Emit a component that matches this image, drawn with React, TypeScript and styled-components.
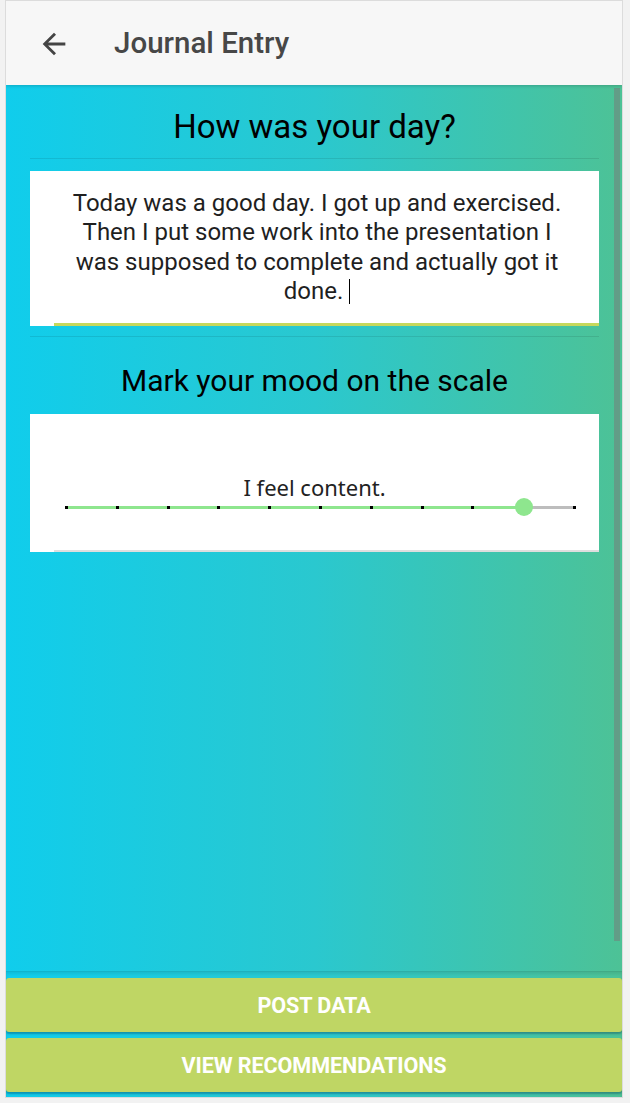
import React from "react";
import styled, { createGlobalStyle } from "styled-components";

const GlobalStyle = createGlobalStyle`
  html, body {
    margin: 0;
    padding: 0;
    background: #f2f2f2;
  }
  body {
    font-family: Roboto, "Liberation Sans", sans-serif;
  }
  * { box-sizing: border-box; }
`;

const Frame = styled.div`
  width: 618px;
  height: 1098px;
  margin-left: 5px;
  border: 1px solid #dcdcdc;
  display: flex;
  flex-direction: column;
  overflow: hidden;
  background: linear-gradient(to right, #10cdec 0%, #2ac8cf 50%, #4dc296 100%);
`;

const Toolbar = styled.header`
  height: 84px;
  flex: 0 0 84px;
  background: #f7f7f7;
  display: flex;
  align-items: center;
  padding-left: 30px;
  position: relative;
  z-index: 2;
  box-shadow: 0 1px 3px rgba(0, 0, 0, 0.18);
`;

const BackButton = styled.button`
  width: 36px;
  height: 36px;
  padding: 0;
  border: none;
  background: transparent;
  display: flex;
  align-items: center;
  justify-content: center;
  margin-right: 42px;
  margin-top: 2px;
  color: #444;
`;

const Title = styled.h1`
  margin: 0;
  font-family: Roboto, "Liberation Sans", sans-serif;
  font-size: 29.5px;
  font-weight: 500;
  color: #474747;
`;

const Body = styled.div`
  flex: 1;
  position: relative;
  display: flex;
  flex-direction: column;
  min-height: 0;
`;

const Main = styled.main`
  flex: 1;
  padding: 0 23px 0 24px;
  display: flex;
  flex-direction: column;
`;

const Scrollbar = styled.div`
  position: absolute;
  right: 2px;
  top: 3px;
  width: 6px;
  height: 853px;
  background: rgba(119, 119, 119, 0.5);
`;

const SectionTitle = styled.h2<{ $top: number; $bottom: number; $size: number }>`
  margin: ${(p) => p.$top}px 0 ${(p) => p.$bottom}px;
  text-align: center;
  font-family: Roboto, "Liberation Sans", sans-serif;
  font-weight: 400;
  font-size: ${(p) => p.$size}px;
  line-height: 37px;
  color: #000;
`;

const Divider = styled.hr<{ $top?: number }>`
  margin: ${(p) => p.$top ?? 0}px 0 0;
  border: none;
  height: 1px;
  background: rgba(0, 0, 0, 0.09);
`;

const Card = styled.section<{ $top?: number }>`
  background: #fff;
  margin-top: ${(p) => p.$top ?? 0}px;
`;

const Field = styled.div<{ $line: string; $thick: number }>`
  margin-left: 24px;
  border-bottom: ${(p) => p.$thick}px solid ${(p) => p.$line};
`;

const EntryText = styled.p`
  margin: 0;
  padding: 18px 32px 17px 13px;
  text-align: center;
  font-family: Roboto, "Liberation Sans", sans-serif;
  font-size: 24px;
  line-height: 29.3px;
  color: #1f1f1f;
`;

const Caret = styled.span`
  display: inline-block;
  width: 1px;
  height: 25px;
  background: #000;
  margin-left: 6px;
  vertical-align: -5px;
`;

const SliderBox = styled.div`
  padding: 60px 24px 38px 12px;
  display: flex;
  flex-direction: column;
  align-items: stretch;
`;

const MoodLabel = styled.div`
  text-align: center;
  margin: 0 0 2px -12px;
  font-family: "Noto Sans", "Open Sans", sans-serif;
  font-size: 22px;
  line-height: 26px;
  color: #222;
`;

const TrackRow = styled.div`
  height: 10px;
  display: flex;
  align-items: center;
`;

const Track = styled.div`
  position: relative;
  flex: 1;
  height: 3px;
  background: #bdbdbd;
`;

const Fill = styled.div`
  position: absolute;
  left: 0;
  top: 0;
  bottom: 0;
  background: #8ee68e;
`;

const Ticks = styled.div`
  position: absolute;
  left: -1px;
  right: -1px;
  top: 0;
  bottom: 0;
  display: flex;
  justify-content: space-between;
  align-items: center;
`;

const Tick = styled.span`
  width: 3px;
  height: 3px;
  background: #000;
`;

const Thumb = styled.span`
  position: absolute;
  top: 50%;
  width: 18px;
  height: 18px;
  margin: -9px 0 0 -9px;
  border-radius: 50%;
  background: #8ee68e;
`;

const Footer = styled.footer`
  border-top: 1px solid rgba(0, 0, 0, 0.12);
  box-shadow: inset 0 2px 3px rgba(0, 0, 0, 0.08);
  padding: 6px 0 5px;
  display: flex;
  flex-direction: column;
  gap: 6px;
`;

const ActionButton = styled.button`
  height: 54px;
  width: 100%;
  border: none;
  border-radius: 3px;
  background: #bfd664;
  color: #fff;
  font-family: Roboto, "Liberation Sans", sans-serif;
  font-size: 21.6px;
  font-weight: 700;
  text-transform: uppercase;
  letter-spacing: -0.1px;
  box-shadow: 0 2px 2px rgba(0, 40, 80, 0.35);
`;

const BackArrow = () => (
  <svg width="34" height="34" viewBox="0 0 24 24" fill="currentColor" aria-hidden="true">
    <path d="M20 11H7.83l5.59-5.59L12 4l-8 8 8 8 1.41-1.41L7.83 13H20v-2z" />
  </svg>
);

const MoodSlider: React.FC<{ value: number; max: number; label: string }> = ({ value, max, label }) => {
  const pct = (value / max) * 100;
  return (
    <SliderBox>
      <MoodLabel>{label}</MoodLabel>
      <TrackRow>
        <Track>
          <Fill style={{ width: `${pct}%` }} />
          <Ticks>
            {Array.from({ length: max + 1 }).map((_, i) => (
              <Tick key={i} />
            ))}
          </Ticks>
          <Thumb style={{ left: `${pct}%` }} />
        </Track>
      </TrackRow>
    </SliderBox>
  );
};

export default function App() {
  return (
    <>
      <GlobalStyle />
      <Frame>
        <Toolbar>
          <BackButton aria-label="Back">
            <BackArrow />
          </BackButton>
          <Title>Journal Entry</Title>
        </Toolbar>
        <Body>
          <Main>
            <SectionTitle $top={23} $bottom={13} $size={33}>How was your day?</SectionTitle>
            <Divider />
            <Card $top={12}>
              <Field $line="#c6d85c" $thick={3}>
                <EntryText>
                  Today was a good day. I got up and exercised. Then I put some work into the presentation I
                  was supposed to complete and actually got it done.
                  <Caret />
                </EntryText>
              </Field>
            </Card>
            <Divider $top={10} />
            <SectionTitle $top={25} $bottom={15} $size={30}>Mark your mood on the scale</SectionTitle>
            <Card>
              <Field $line="#dedede" $thick={2}>
                <MoodSlider value={9} max={10} label="I feel content." />
              </Field>
            </Card>
          </Main>
          <Scrollbar />
          <Footer>
            <ActionButton>Post Data</ActionButton>
            <ActionButton>View Recommendations</ActionButton>
          </Footer>
        </Body>
      </Frame>
    </>
  );
}
